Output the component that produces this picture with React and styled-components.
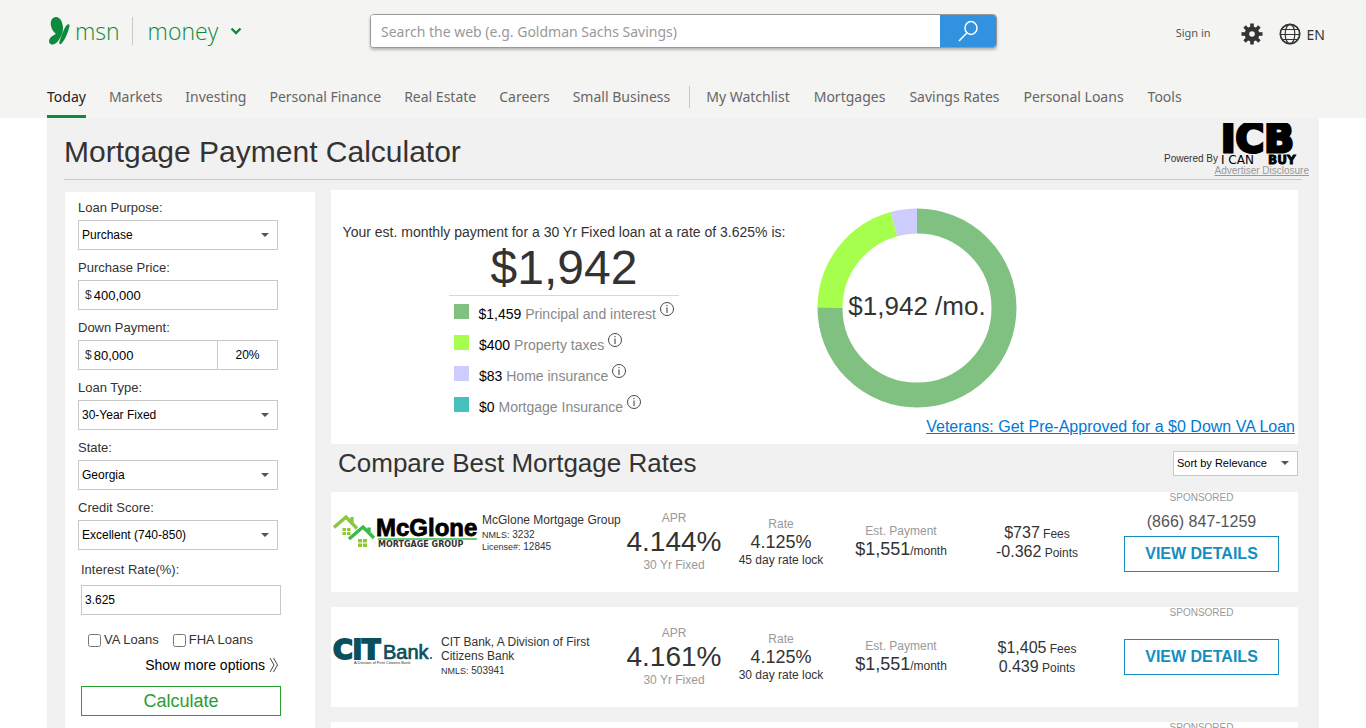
import React from "react";
import styled, { createGlobalStyle } from "styled-components";

const navLinks = ["Today", "Markets", "Investing", "Personal Finance", "Real Estate", "Careers", "Small Business"];
const moreLinks = ["My Watchlist", "Mortgages", "Savings Rates", "Personal Loans", "Tools"];

const costs = [
  { amount: 1459, text: "$1,459", name: "Principal and interest", color: "#80c080" },
  { amount: 400, text: "$400", name: "Property taxes", color: "#a6ff4d" },
  { amount: 83, text: "$83", name: "Home insurance", color: "#ccccff" },
  { amount: 0, text: "$0", name: "Mortgage Insurance", color: "#46bfbd" },
];

function Butterfly() {
  return (
    <svg width="21" height="28" viewBox="0 0 63 84" fill="#0d8a3e" aria-hidden="true">
      <path d="M21 0C34 0 42 17 42 34C42 45 38 55 33 62C30 56 9 47 6 27C3 11 10 0 21 0Z" />
      <path d="M16 53C24 48 32 50 34 58C34 67 21 83 10 83C3 83 0 78 0 72C1 63 8 57 16 53Z" />
      <path d="M58 22C63 22 62 28 60 34C56 50 45 74 37 80C33 83 30 81 31 76C34 64 38 52 43 42C48 31 53 22 58 22Z" />
    </svg>
  );
}

function Gear() {
  return (
    <svg width="22" height="22" viewBox="0 0 22 22" fill="#333" aria-hidden="true">
      {[0, 45, 90, 135].map((a) => (
        <rect key={a} x="9.2" y="0.5" width="3.6" height="21" transform={`rotate(${a} 11 11)`} />
      ))}
      <circle cx="11" cy="11" r="7.4" />
      <circle cx="11" cy="11" r="2.8" fill="#f4f4f2" />
    </svg>
  );
}

function Globe() {
  return (
    <svg width="22" height="22" viewBox="0 0 22 22" fill="none" stroke="#333" strokeWidth="1.2" aria-hidden="true">
      <circle cx="11" cy="11" r="9.7" strokeWidth="1.7" />
      <ellipse cx="11" cy="11" rx="4.8" ry="9.7" />
      <path d="M1 11.5H21M3 6.5H19M3 16.5H19" />
    </svg>
  );
}

function IcbLogo() {
  return (
    <svg width="88" height="42" viewBox="0 0 88 42" role="img" aria-label="ICB I CAN BUY">
      <text x="0" y="29" fontFamily="DejaVu Sans" fontWeight="700" fontSize="39" stroke="#000" strokeWidth="3">ICB</text>
      <text x="0" y="41" fontFamily="DejaVu Sans" fontSize="12">I CAN</text>
      <text x="47" y="41" fontFamily="DejaVu Sans" fontWeight="700" fontSize="12" stroke="#000" strokeWidth="0.8">BUY</text>
    </svg>
  );
}

function McGloneLogo() {
  return (
    <svg width="145" height="44" viewBox="0 0 145 44" role="img" aria-label="McGlone Mortgage Group">
      <g fill="none" strokeWidth="3.4">
        <path d="M1 14.5L13 4L24 15.5M19 10V4" stroke="#8cc83c" />
        <path d="M16 26L30 14L41 25M36 19V14.5" stroke="#3cba4a" />
      </g>
      <g fill="#8fcb2c">
        <path d="M9.5 15h3.5v3H9.5zM14 15h3.5v3H14zM9.5 19h3.5v3H9.5zM14 19h3.5v3H14z" />
        <path d="M25 26h4v3.5h-4zM30 26h4v3.5h-4zM25 30.5h4V34h-4zM30 30.5h4V34h-4z" />
      </g>
      <text x="43" y="23" fontFamily="Liberation Sans" fontWeight="700" fontSize="24" fill="#000" stroke="#000" strokeWidth="0.8">McGlone</text>
      <path d="M45 26H144" stroke="#3cba4a" strokeWidth="1.6" />
      <text x="45" y="34" fontFamily="DejaVu Sans" fontWeight="700" fontSize="8" fill="#333">MORTGAGE GROUP</text>
    </svg>
  );
}

function CitLogo() {
  return (
    <svg width="100" height="32" viewBox="0 0 100 32" role="img" aria-label="CIT Bank" fill="#0b4f5c">
      <text x="0" y="24" fontFamily="DejaVu Sans" fontWeight="700" fontSize="27" stroke="#0b4f5c" strokeWidth="2">CiT</text>
      <text x="50" y="24" fontFamily="Liberation Sans" fontSize="20" stroke="#0b4f5c" strokeWidth="0.7">Bank</text>
      <circle cx="98" cy="23" r="1" />
      <text x="21" y="29" fontFamily="Liberation Sans" fontSize="4" fill="#333">A Division of First Citizens Bank</text>
    </svg>
  );
}

function Dropdown({ id, value, small, label }) {
  return (
    <SelectBox $small={small}>
      <Select id={id} aria-label={label} defaultValue={value} $small={small}>
        <option>{value}</option>
      </Select>
      <Arrow width="8" height="4" viewBox="0 0 8 4" aria-hidden="true">
        <path d="M0 0H8L4 4Z" fill="#555" />
      </Arrow>
    </SelectBox>
  );
}

function Donut() {
  let start = 0;
  return (
    <DonutBox>
      <svg width="200" height="200" viewBox="0 0 200 200" aria-hidden="true">
        <g fill="none" strokeWidth="25" transform="rotate(-90 100 100)">
          {costs.filter((c) => c.amount > 0).map((c) => {
            const offset = -start;
            start += c.amount;
            return (
              <circle key={c.name} cx="100" cy="100" r="87" stroke={c.color} pathLength="1942"
                strokeDasharray={`${c.amount} ${1942 - c.amount}`} strokeDashoffset={offset} />
            );
          })}
        </g>
      </svg>
      <DonutLabel>$1,942 /mo.</DonutLabel>
    </DonutBox>
  );
}

function Offer({ logo, name, ids, apr, lock, fees, points, phone }) {
  return (
    <OfferCard>
      <Lender $tall={!phone}>
        {logo}
        <div>
          <LenderName>{name}</LenderName>
          {ids.map(([k, v]) => (
            <LenderId key={k}><small>{k}</small> {v}</LenderId>
          ))}
        </div>
      </Lender>
      <Cell $top={18}>
        <Muted>APR</Muted>
        <Apr>{apr}</Apr>
        <Muted>30 Yr Fixed</Muted>
      </Cell>
      <Cell $top={24}>
        <Muted>Rate</Muted>
        <Figure>4.125%</Figure>
        <Note>{lock}</Note>
      </Cell>
      <Cell $top={31}>
        <Muted>Est. Payment</Muted>
        <Figure>$1,551<small>/month</small></Figure>
      </Cell>
      <Cell $top={32}>
        <Fee>{fees}<small> Fees</small></Fee>
        <Fee>{points}<small> Points</small></Fee>
      </Cell>
      <Action>
        <Sponsored>SPONSORED</Sponsored>
        {phone && <Phone>{phone}</Phone>}
        <Details $alone={!phone} href="#details">VIEW DETAILS</Details>
      </Action>
    </OfferCard>
  );
}

function App() {
  return (
    <>
      <GlobalStyle />
      <Header>
        <TopRow>
          <Brand>
            <Butterfly />
            <BrandLink href="#msn">msn</BrandLink>
            <BrandLine />
            <BrandLink href="#money">money</BrandLink>
            <svg width="12" height="8" viewBox="0 0 12 8" fill="none" stroke="#0d8a3e" strokeWidth="2.4" aria-hidden="true">
              <path d="M1.5 1.5L6 6L10.5 1.5" />
            </svg>
          </Brand>
          <Search>
            <SearchInput type="text" aria-label="Search the web" placeholder="Search the web (e.g. Goldman Sachs Savings)" />
            <SearchButton type="button" aria-label="Search">
              <svg width="22" height="22" viewBox="0 0 22 22" fill="none" stroke="#fff" strokeWidth="1.5" aria-hidden="true">
                <ellipse cx="14" cy="8" rx="6" ry="6.5" />
                <path d="M9.8 13L2 21" />
              </svg>
            </SearchButton>
          </Search>
          <Tools>
            <SignIn href="#signin">Sign in</SignIn>
            <IconButton type="button" aria-label="Settings"><Gear /></IconButton>
            <IconButton type="button"><Globe /> EN</IconButton>
          </Tools>
        </TopRow>
        <Nav>
          <NavGroup $gap={23}>
            {navLinks.map((t, i) => <NavLink key={t} href="#nav" $active={i === 0}>{t}</NavLink>)}
          </NavGroup>
          <NavLine />
          <NavGroup $gap={24}>
            {moreLinks.map((t) => <NavLink key={t} href="#nav">{t}</NavLink>)}
          </NavGroup>
        </Nav>
      </Header>

      <Page>
        <TitleBar>
          <Title>Mortgage Payment Calculator</Title>
          <Powered>
            <PoweredRow>Powered By <IcbLogo /></PoweredRow>
            <a href="#disclosure">Advertiser Disclosure</a>
          </Powered>
        </TitleBar>
        <Rule />
        <Columns>
          <Sidebar>
            <Field>
              <Label htmlFor="purpose">Loan Purpose:</Label>
              <Dropdown id="purpose" value="Purchase" />
            </Field>
            <Field>
              <Label htmlFor="price">Purchase Price:</Label>
              <MoneyBox><span>$</span><MoneyInput id="price" defaultValue="400,000" /></MoneyBox>
            </Field>
            <Field>
              <Label htmlFor="down">Down Payment:</Label>
              <MoneyBox>
                <span>$</span>
                <MoneyInput id="down" defaultValue="80,000" />
                <PercentInput aria-label="Down payment percent" defaultValue="20%" />
              </MoneyBox>
            </Field>
            <Field>
              <Label htmlFor="type">Loan Type:</Label>
              <Dropdown id="type" value="30-Year Fixed" />
            </Field>
            <Field>
              <Label htmlFor="state">State:</Label>
              <Dropdown id="state" value="Georgia" />
            </Field>
            <Field>
              <Label htmlFor="score">Credit Score:</Label>
              <Dropdown id="score" value="Excellent (740-850)" />
            </Field>
            <Extra>
              <Label htmlFor="rate">Interest Rate(%):</Label>
              <RateInput id="rate" defaultValue="3.625" />
              <Checks>
                <Check><input type="checkbox" />VA Loans</Check>
                <Check><input type="checkbox" />FHA Loans</Check>
              </Checks>
              <MoreButton type="button">
                Show more options
                <svg width="10" height="16" viewBox="0 0 10 16" fill="none" stroke="#333" strokeWidth="0.9" aria-hidden="true">
                  <path d="M1 1L5 8L1 15M4.5 1L8.5 8L4.5 15" />
                </svg>
              </MoreButton>
              <Calculate type="button">Calculate</Calculate>
            </Extra>
          </Sidebar>

          <Main>
            <Summary>
              <SummaryRow>
                <Estimate>
                  <Intro>Your est. monthly payment for a 30 Yr Fixed loan at a rate of 3.625% is:</Intro>
                  <Total>$1,942</Total>
                  <Legend>
                    {costs.map((c) => (
                      <LegendItem key={c.name}>
                        <Swatch $color={c.color} />
                        <span><b>{c.text}</b> {c.name}</span>
                        <InfoButton type="button" aria-label={c.name}>
                          <svg width="14" height="14" viewBox="0 0 14 14" fill="none" stroke="#333" aria-hidden="true">
                            <circle cx="7" cy="7" r="6.5" strokeWidth="0.9" />
                            <path d="M7 5.5V11M7 3V4.2" strokeWidth="1" />
                          </svg>
                        </InfoButton>
                      </LegendItem>
                    ))}
                  </Legend>
                </Estimate>
                <Donut />
              </SummaryRow>
              <Veterans href="#va">Veterans: Get Pre-Approved for a $0 Down VA Loan</Veterans>
            </Summary>
            <CompareBar>
              <CompareTitle>Compare Best Mortgage Rates</CompareTitle>
              <Dropdown small label="Sort" value="Sort by Relevance" />
            </CompareBar>
            <Offers>
              <Offer logo={<McGloneLogo />} name="McGlone Mortgage Group" ids={[["NMLS:", "3232"], ["License#:", "12845"]]}
                apr="4.144%" lock="45 day rate lock" fees="$737" points="-0.362" phone="(866) 847-1259" />
              <Offer logo={<CitLogo />} name="CIT Bank, A Division of First Citizens Bank" ids={[["NMLS:", "503941"]]}
                apr="4.161%" lock="30 day rate lock" fees="$1,405" points="0.439" />
              <OfferCard>
                <Action>
                  <Sponsored>SPONSORED</Sponsored>
                </Action>
              </OfferCard>
            </Offers>
          </Main>
        </Columns>
      </Page>
    </>
  );
}

const GlobalStyle = createGlobalStyle`
* {
  box-sizing: border-box;
}
body {
  margin: 0;
  background: #fff;
  color: #333;
  font-family: "Liberation Sans", Arial, sans-serif;
}
input, select, button {
  font-family: inherit;
  border-radius: 0;
}
svg {
  display: block;
  flex: none;
}
`;

const Header = styled.header`
background: #f4f4f2;
padding: 0 41px 0 47px;
font-family: "Noto Sans", "Open Sans", sans-serif;
`;

const TopRow = styled.div`
display: flex;
align-items: center;
height: 62px;
margin-bottom: 13px;
`;

const Brand = styled.div`
display: flex;
align-items: center;
width: 323px;
padding-left: 2px;
`;

const BrandLink = styled.a`
font-family: "Open Sans", sans-serif;
font-size: 23px;
font-weight: 300;
line-height: 28px;
color: #0d8a3e;
text-decoration: none;
margin-left: 5px;
margin-right: 12px;
`;

const BrandLine = styled.span`
width: 1px;
height: 28px;
background: #c8c8c8;
margin-right: 10px;
`;

const Search = styled.form`
display: flex;
width: 627px;
height: 34px;
border: 1px solid #999;
border-radius: 4px;
overflow: hidden;
box-shadow: 0 2px 3px rgba(0, 0, 0, 0.25);
background: #fff;
`;

const SearchInput = styled.input`
flex: 1;
min-width: 0;
border: 0;
padding: 0 10px;
font-size: 14px;
outline: none;
&::placeholder {
  color: #999;
}
`;

const SearchButton = styled.button`
width: 56px;
border: 0;
padding: 0;
background: #3392e0;
display: flex;
align-items: center;
justify-content: center;
`;

const Tools = styled.div`
display: flex;
align-items: center;
margin-left: auto;
padding-top: 6px;
`;

const SignIn = styled.a`
font-size: 11px;
color: #555;
text-decoration: none;
margin-right: 14px;
padding-bottom: 3px;
`;

const IconButton = styled.button`
display: flex;
align-items: center;
gap: 6px;
border: 0;
padding: 0;
margin-left: 16px;
background: none;
font-size: 14px;
color: #333;
`;

const Nav = styled.nav`
display: flex;
align-items: center;
height: 43px;
`;

const NavGroup = styled.div`
display: flex;
gap: ${(p) => p.$gap}px;
`;

const NavLink = styled.a`
height: 43px;
line-height: 43px;
font-size: 14px;
white-space: nowrap;
text-decoration: none;
color: ${(p) => (p.$active ? "#222" : "#666")};
border-bottom: ${(p) => (p.$active ? "3px solid #0d8a3e" : "3px solid transparent")};
`;

const NavLine = styled.span`
width: 1px;
height: 22px;
background: #c8c8c8;
margin: 0 16px 0 19px;
`;

const Page = styled.div`
max-width: 1272px;
margin: 0 auto;
background: #f1f1f1;
`;

const TitleBar = styled.div`
display: flex;
justify-content: space-between;
height: 61px;
padding: 5px 10px 0 17px;
`;

const Title = styled.h1`
margin: 0;
font-size: 30px;
font-weight: normal;
line-height: 58px;
`;

const Powered = styled.div`
display: flex;
flex-direction: column;
align-items: flex-end;
font-size: 10px;
line-height: 12px;
a {
  color: #999;
}
`;

const PoweredRow = styled.div`
display: flex;
align-items: flex-end;
gap: 3px;
`;

const Rule = styled.hr`
height: 1px;
border: 0;
background: #c8c8c8;
margin: 0 17px 10px;
`;

const Columns = styled.div`
display: flex;
gap: 16px;
padding: 0 21px 0 18px;
`;

const Sidebar = styled.form`
width: 250px;
flex: none;
margin-top: 2px;
padding: 6px 13px;
background: #fff;
`;

const Field = styled.div`
width: 200px;
margin-bottom: 8px;
`;

const Label = styled.label`
display: block;
font-size: 13px;
line-height: 20px;
margin-bottom: 2px;
`;

const SelectBox = styled.div`
display: grid;
align-items: center;
width: ${(p) => (p.$small ? "125px" : "200px")};
`;

const Select = styled.select`
grid-area: 1 / 1;
appearance: none;
width: 100%;
height: ${(p) => (p.$small ? "25px" : "30px")};
padding: 0 3px;
border: 1px solid #c8c8c8;
background: #fff;
color: #000;
font-size: ${(p) => (p.$small ? "11px" : "12px")};
`;

const Arrow = styled.svg`
grid-area: 1 / 1;
justify-self: end;
margin-right: 9px;
pointer-events: none;
`;

const MoneyBox = styled.div`
display: flex;
align-items: center;
height: 30px;
border: 1px solid #c8c8c8;
padding-left: 6px;
font-size: 12px;
`;

const MoneyInput = styled.input`
flex: 1;
min-width: 0;
border: 0;
padding: 0 0 0 2px;
font-size: 13px;
color: #000;
`;

const PercentInput = styled.input`
width: 60px;
height: 28px;
border: 0;
border-left: 1px solid #c8c8c8;
padding: 0;
text-align: center;
font-size: 12px;
color: #000;
`;

const Extra = styled.div`
width: 200px;
margin: 10px 0 0 3px;
`;

const RateInput = styled.input`
width: 100%;
height: 30px;
margin-top: 3px;
border: 1px solid #c8c8c8;
padding: 0 3px;
font-size: 12px;
color: #000;
`;

const Checks = styled.div`
display: flex;
gap: 14px;
padding: 15px 0 0 7px;
`;

const Check = styled.label`
display: flex;
align-items: center;
gap: 3px;
font-size: 13px;
line-height: 20px;
white-space: nowrap;
input {
  width: 13px;
  height: 13px;
  margin: 0;
}
`;

const MoreButton = styled.button`
display: flex;
align-items: center;
gap: 4px;
margin: 5px 2px 11px auto;
padding: 0;
border: 0;
background: none;
color: #000;
font-size: 14px;
line-height: 20px;
`;

const Calculate = styled.button`
width: 100%;
height: 30px;
padding: 0;
border: 1px solid #2a9d2f;
background: #fff;
color: #2a9d2f;
font-size: 18px;
`;

const Main = styled.main`
flex: 1;
min-width: 0;
`;

const Summary = styled.section`
background: #fff;
padding: 18px 3px 8px 0;
`;

const SummaryRow = styled.div`
display: flex;
gap: 20px;
`;

const Estimate = styled.div`
width: 466px;
padding-top: 16px;
display: flex;
flex-direction: column;
align-items: center;
`;

const Intro = styled.p`
margin: 0;
font-size: 14px;
line-height: 16px;
white-space: nowrap;
`;

const Total = styled.div`
width: 230px;
font-size: 48px;
line-height: 55px;
text-align: center;
border-bottom: 1px solid #d8d8d8;
`;

const Legend = styled.ul`
list-style: none;
display: flex;
flex-direction: column;
gap: 11px;
width: 220px;
margin: 0;
padding: 8px 0 0;
`;

const LegendItem = styled.li`
display: flex;
height: 20px;
font-size: 14px;
line-height: 20px;
white-space: nowrap;
color: #888;
b {
  font-weight: normal;
  color: #000;
}
`;

const Swatch = styled.span`
width: 15px;
height: 15px;
margin-right: 10px;
background: ${(p) => p.$color};
`;

const InfoButton = styled.button`
align-self: flex-start;
margin: -2px 0 0 4px;
padding: 0;
border: 0;
background: none;
`;

const DonutBox = styled.div`
display: grid;
place-items: center;
height: 200px;
> * {
  grid-area: 1 / 1;
}
`;

const DonutLabel = styled.div`
font-size: 26px;
line-height: 30px;
padding-bottom: 4px;
`;

const Veterans = styled.a`
display: block;
width: fit-content;
margin: 1px 0 0 auto;
font-size: 16px;
line-height: 18px;
color: #0078d4;
`;

const CompareBar = styled.div`
display: flex;
align-items: center;
justify-content: space-between;
height: 38px;
margin-bottom: 10px;
padding-left: 7px;
`;

const CompareTitle = styled.h2`
margin: 0;
font-size: 26px;
font-weight: normal;
`;

const Offers = styled.div`
display: flex;
flex-direction: column;
gap: 15px;
`;

const OfferCard = styled.article`
display: grid;
grid-template-columns: 1fr 100px 114px 126px 146px 183px;
min-height: 100px;
padding-right: 5px;
background: #fff;
`;

const Lender = styled.div`
display: flex;
align-items: flex-start;
gap: ${(p) => (p.$tall ? "8px" : "4px")};
padding: ${(p) => (p.$tall ? "28px" : "21px")} 0 0 2px;
`;

const LenderName = styled.div`
font-size: 12px;
line-height: 14px;
max-width: 160px;
margin-bottom: 2px;
`;

const LenderId = styled.div`
font-size: 10px;
line-height: 11px;
small {
  font-size: 9px;
}
`;

const Cell = styled.div`
padding-top: ${(p) => p.$top}px;
text-align: center;
white-space: nowrap;
small {
  font-size: 12px;
}
`;

const Muted = styled.div`
font-size: 12px;
line-height: 16px;
color: #999;
`;

const Note = styled.div`
font-size: 12px;
line-height: 16px;
`;

const Apr = styled.div`
font-size: 28px;
line-height: 31px;
`;

const Figure = styled.div`
font-size: 18px;
line-height: 20px;
`;

const Fee = styled.div`
font-size: 16px;
line-height: 18px;
`;

const Action = styled.div`
grid-column: 6;
display: flex;
flex-direction: column;
align-items: center;
`;

const Sponsored = styled.div`
font-size: 10px;
line-height: 12px;
color: #999;
`;

const Phone = styled.div`
font-size: 16px;
line-height: 18px;
color: #555;
margin: 9px 0 5px;
`;

const Details = styled.a`
width: 155px;
height: 36px;
line-height: 34px;
margin-top: ${(p) => (p.$alone ? "20px" : "0")};
border: 1px solid #148ebf;
color: #148ebf;
font-size: 16px;
font-weight: bold;
text-align: center;
text-decoration: none;
`;

export default App;
